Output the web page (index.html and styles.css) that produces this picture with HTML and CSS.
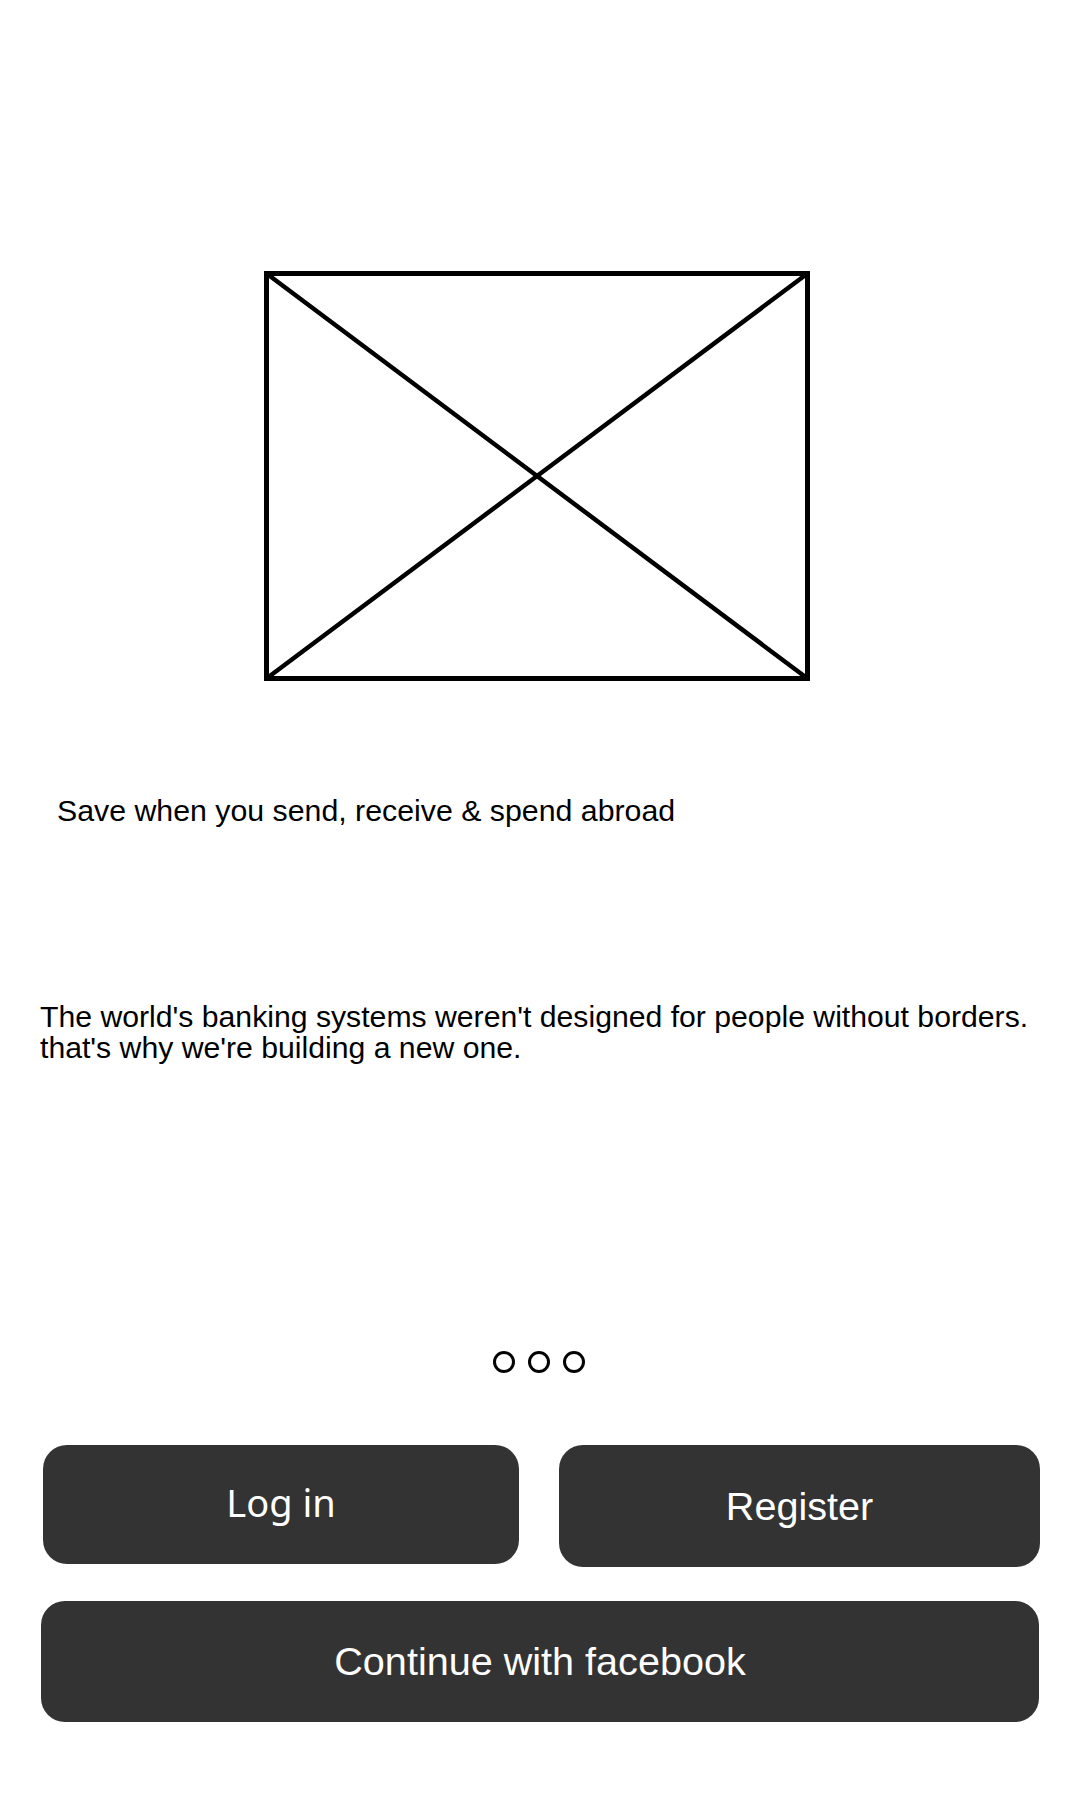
FILE: index.html
```html
<!DOCTYPE html>
<html lang="en">
<head>
<meta charset="utf-8">
<title>Welcome</title>
<link rel="stylesheet" href="styles.css">
</head>
<body>
<main class="screen">
  <div class="hero">
    <svg class="placeholder" viewBox="0 0 546 410" width="546" height="410" aria-hidden="true">
      <rect x="2.5" y="2.5" width="541" height="405" fill="none" stroke="#000" stroke-width="5"/>
      <line x1="2.5" y1="2.5" x2="543.5" y2="407.5" stroke="#000" stroke-width="4.5"/>
      <line x1="543.5" y1="2.5" x2="2.5" y2="407.5" stroke="#000" stroke-width="4.5"/>
    </svg>
  </div>
  <h1 class="title">Save when you send, receive &amp; spend abroad</h1>
  <p class="desc">The world's banking systems weren't designed for people without borders.<br>that's why we're building a new one.</p>
  <div class="dots">
    <span class="dot"></span><span class="dot"></span><span class="dot"></span>
  </div>
  <div class="row">
    <button class="btn btn-login">Log in</button>
    <button class="btn btn-register">Register</button>
  </div>
  <button class="btn btn-facebook">Continue with facebook</button>
</main>
</body>
</html>
```

FILE: styles.css
```css
html, body {
  margin: 0;
  padding: 0;
  background: #ffffff;
}

body {
  width: 1080px;
  height: 1800px;
  font-family: "Liberation Sans", Arial, sans-serif;
  color: #000;
}

.screen {
  display: flex;
  flex-direction: column;
  padding-top: 271px;
}

.hero {
  padding-left: 264px;
  height: 410px;
}

.placeholder {
  display: block;
}

.title {
  margin: 113px 0 0 0;
  padding-left: 57px;
  font-size: 30.3px;
  line-height: 34px;
  font-weight: normal;
}

.desc {
  margin: 173px 0 0 0;
  padding-left: 40px;
  font-size: 30.2px;
  line-height: 31px;
}

.dots {
  margin-top: 288px;
  display: flex;
  justify-content: center;
  gap: 13px;
  padding-right: 2px;
}

.dot {
  width: 22px;
  height: 22px;
  box-sizing: border-box;
  border: 3px solid #000;
  border-radius: 50%;
}

.row {
  margin-top: 72px;
  display: flex;
  align-items: flex-start;
  padding-left: 43px;
  gap: 40px;
}

.btn {
  border: none;
  background: #333333;
  color: #ffffff;
  border-radius: 24px;
  font-family: "Liberation Sans", Arial, sans-serif;
  font-size: 39.6px;
  padding: 0;
  display: flex;
  align-items: center;
  justify-content: center;
}

.btn-login {
  width: 476px;
  height: 119px;
  padding-bottom: 6px;
  font-family: "Noto Sans", "Open Sans", sans-serif;
  font-size: 38px;
}

.btn-register {
  width: 481px;
  height: 122px;
}

.btn-facebook {
  margin: 34px 0 0 41px;
  width: 998px;
  height: 121px;
}
```
